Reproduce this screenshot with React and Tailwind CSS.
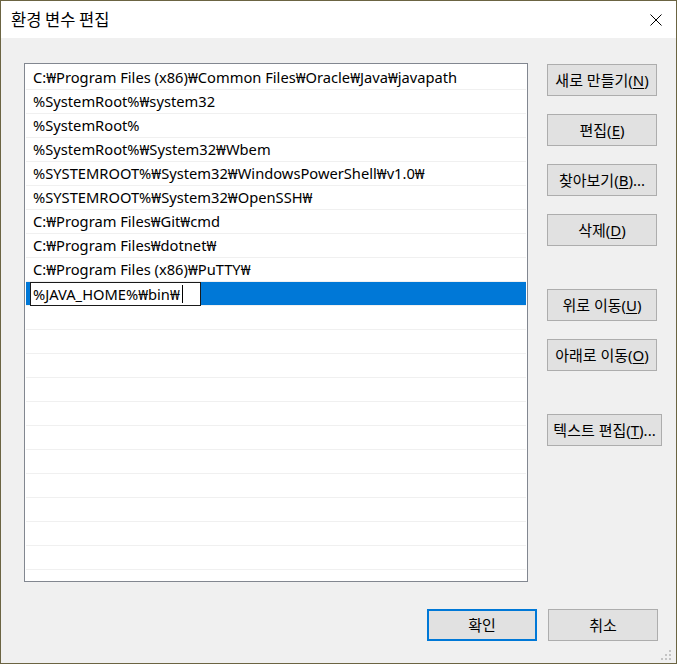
import { useState } from 'react';

const paths = [
  'C:₩Program Files (x86)₩Common Files₩Oracle₩Java₩javapath',
  '%SystemRoot%₩system32',
  '%SystemRoot%',
  '%SystemRoot%₩System32₩Wbem',
  '%SYSTEMROOT%₩System32₩WindowsPowerShell₩v1.0₩',
  '%SYSTEMROOT%₩System32₩OpenSSH₩',
  'C:₩Program Files₩Git₩cmd',
  'C:₩Program Files₩dotnet₩',
  'C:₩Program Files (x86)₩PuTTY₩',
];

const uiFont = { fontFamily: '"Noto Sans", "Noto Sans CJK KR", sans-serif' };

function Btn({ label, hot, suffix = '', wide, primary }) {
  // label + (hot) mnemonic with the letter underlined
  return (
    <button
      className={
        'h-[32px] flex items-center justify-center bg-[#e1e1e1] text-[15px] text-black leading-none ' +
        (wide ? 'w-[115px] ' : 'w-[110px] ') +
        (primary ? 'border-2 border-[#0078d7]' : 'border border-[#adadad]')
      }
    >
      <span>{label}</span>
      {hot && (
        <span>
          (<span className="underline underline-offset-2">{hot}</span>){suffix}
        </span>
      )}
    </button>
  );
}

export default function App() {
  const [value] = useState('%JAVA_HOME%₩bin₩');
  const empty = Array.from({ length: 13 });

  return (
    <div
      className="relative w-[677px] h-[664px] border border-[#6b6442] bg-[#f0f0f0] flex flex-col overflow-hidden"
      style={uiFont}
    >
      {/* Title bar */}
      <div className="h-[37px] bg-white flex items-center justify-between pl-[10px] pr-[14px]">
        <span className="text-[16.5px] text-black" style={{ fontFamily: '"Noto Sans CJK KR", sans-serif' }}>
          환경 변수 편집
        </span>
        <svg width="12" height="12" viewBox="0 0 12 12" className="mt-[1px]">
          <path d="M0.5 0.5L11.5 11.5M11.5 0.5L0.5 11.5" stroke="#000" strokeWidth="1" />
        </svg>
      </div>

      <div className="flex-1 flex flex-col pl-[23px] pt-[25px]">
        <div className="flex">
          {/* Path list */}
          <div className="w-[504px] h-[519px] border border-[#828790] bg-white p-px overflow-hidden">
            <div className="pt-px">
              {paths.map((p) => (
                <div
                  key={p}
                  className="h-[24px] border-b border-[#f0f0f0] pl-[7px] flex items-center text-[14.7px] text-black whitespace-nowrap"
                >
                  {p}
                </div>
              ))}
              <div className="relative h-[24px] border-b border-[#f0f0f0] bg-[#0078d7]">
                <div className="absolute left-[4px] top-0 w-[171px] h-[24px] border border-[#1a1a1a] bg-white flex items-center pl-[2px] text-[14.7px] text-black whitespace-nowrap">
                  {value}
                  <span className="inline-block w-px h-[18px] bg-black ml-[2px]" />
                </div>
              </div>
              {empty.map((_, i) => (
                <div key={i} className="h-[24px] border-b border-[#f0f0f0]" />
              ))}
            </div>
          </div>

          {/* Action buttons */}
          <div className="ml-[19px] mt-[1px] flex flex-col">
            <Btn label="새로 만들기" hot="N" />
            <div className="mt-[18px]">
              <Btn label="편집" hot="E" />
            </div>
            <div className="mt-[18px]">
              <Btn label="찾아보기" hot="B" suffix="..." />
            </div>
            <div className="mt-[18px]">
              <Btn label="삭제" hot="D" />
            </div>
            <div className="mt-[43px]">
              <Btn label="위로 이동" hot="U" />
            </div>
            <div className="mt-[18px]">
              <Btn label="아래로 이동" hot="O" />
            </div>
            <div className="mt-[43px]">
              <Btn label="텍스트 편집" hot="T" suffix="..." wide />
            </div>
          </div>
        </div>

        {/* Footer */}
        <div className="flex justify-end gap-[11px] pr-[18px] mt-[27px]">
          <Btn label="확인" primary />
          <Btn label="취소" />
        </div>
      </div>

      {/* Resize grip */}
      <svg className="absolute right-[3px] bottom-[1px]" width="12" height="12" viewBox="0 0 12 12">
        <rect x="8" y="0" width="2" height="2" fill="#c4c4c4" />
        <rect x="4" y="4" width="2" height="2" fill="#c4c4c4" />
        <rect x="8" y="4" width="2" height="2" fill="#c4c4c4" />
        <rect x="0" y="8" width="2" height="2" fill="#c4c4c4" />
        <rect x="4" y="8" width="2" height="2" fill="#c4c4c4" />
        <rect x="8" y="8" width="2" height="2" fill="#c4c4c4" />
      </svg>
    </div>
  );
}
